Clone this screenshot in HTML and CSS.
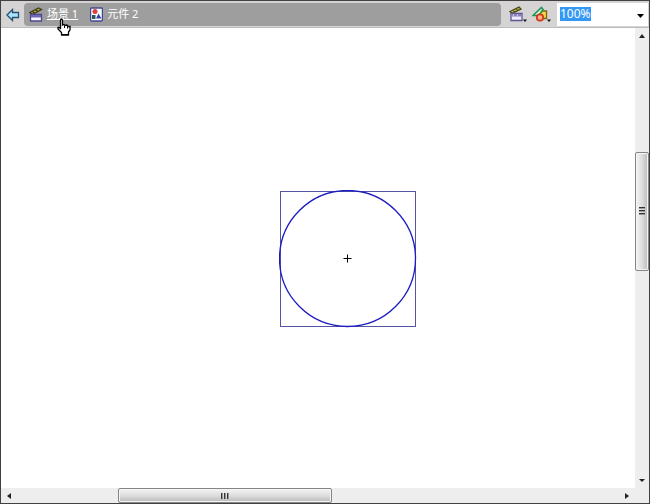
FILE: index.html
```html
<!DOCTYPE html>
<html lang="zh-CN">
<head>
<meta charset="utf-8">
<title>元件 2</title>
<link rel="stylesheet" href="styles.css">
</head>
<body>
<header class="toolbar">
  <button class="tool back" aria-label="返回">
    <svg width="14" height="14" viewBox="0 0 14 14"><path d="M1 7 6.500 1.500V4.500H12.500V9.500H6.500V12.500Z" fill="#a9e4fa" stroke="#235070" stroke-width="1.300"/></svg>
  </button>
  <nav class="crumbs">
    <a class="crumb scene" href="#">
      <svg width="14" height="15" viewBox="0 0 14 15"><path d="M.8 5.500 9.500 1 12.500 2.500 3.500 7.500Z" fill="#a8a43a" stroke="#3b3c16" stroke-width="1.300"/><path d="M3.500 4.500 5.500 6M6.500 2.800 8.800 4.500" stroke="#353613" stroke-width="1.300"/><path d="M1.500 7.500H12.500V14H1.500Z" fill="#f5f4ff" stroke="#4d4893" stroke-width="1.300"/><path d="M2 8H12V10.500H2Z" fill="#7168b5"/></svg>
      <span>场景 1</span>
    </a>
    <a class="crumb" href="#">
      <svg width="13" height="15" viewBox="0 0 13 15"><rect x=".6" y="1" width="11.800" height="13" rx="1" fill="#fff" stroke="#3f4a91" stroke-width="1.300"/><circle cx="5" cy="4.500" r="2.500" fill="#d9403b"/><path d="M2 8H5.500V12H2Z" fill="#275b57"/><path d="M8.500 6.500 11.500 11.500H6Z" fill="#353fae"/></svg>
      <span>元件 2</span>
    </a>
    <svg class="cursor" width="16" height="18" viewBox="0 0 16 18"><path d="M4.500 10V2Q5.500.5 6.500 2V7L8 6.500 9 7.500 11 7 12 8.500 14 8.500V12L12.500 14V17H5.500V14.500L2 11V9.500H3.500L5 11" fill="#fff" stroke="#000" stroke-width="1.300"/><path d="M8.500 8V10M11.500 8.500V10.500M6 16.500H12" stroke="#000"/></svg>
  </nav>
  <div class="tools">
    <button class="tool" aria-label="编辑场景">
      <svg width="19" height="17" viewBox="0 0 19 17"><path d="M1 5.500 10 1 12 3 3 7.500Z" fill="#b3ad3d" stroke="#4b4b1e" stroke-width="1.300"/><path d="M4 4.500 6 6M7 3 9 4.500" stroke="#4b4b1e"/><path d="M2 7.500H13V14.500H2Z" fill="#eeecff" stroke="#5e5791" stroke-width="1.300"/><path d="M2.500 8H12.500V10.500H2.500Z" fill="#857cb9"/><path d="M5 8 4 10M9 8 8 10" stroke="#d8d4ee"/><path d="M14 13.500H18L16 16Z" fill="#111"/></svg>
    </button>
    <button class="tool" aria-label="编辑元件">
      <svg width="20" height="17" viewBox="0 0 20 17"><path d="M7.500 5H14.500V12.500H7.500Z" fill="#f5d63e" stroke="#806514" stroke-width="1.300"/><path d="M1 9.500 9.500 1.500 11 3.500 7 9.500Z" fill="#d7f3dc" stroke="#229657" stroke-width="1.700"/><circle cx="8" cy="11.500" r="3.200" fill="#ffb184" stroke="#cf3c1e" stroke-width="1.800"/><path d="M15 13.500H19L17 16Z" fill="#111"/></svg>
    </button>
  </div>
  <div class="zoom">
    <input id="zoom" type="text" value="100%" aria-label="缩放比例" autofocus>
    <button class="tool drop" aria-label="选择缩放比例"><svg width="7" height="4" viewBox="0 0 7 4"><path d="M0 0H7L3.500 4Z" fill="#000"/></svg></button>
  </div>
</header>
<main class="stage">
  <svg class="symbol" width="138" height="138" viewBox="0 0 138 138" fill="none">
    <rect x="1.500" y="1.500" width="135" height="135" stroke="#5555a8"/>
    <circle cx="68.500" cy="68.500" r="68" stroke="#1b1bc0" stroke-width="1.300"/>
    <path d="M64.500 68.500H72.500M68.500 64.500V72.500" stroke="#000"/>
  </svg>
</main>
<div class="scroll vertical">
  <button class="arrow" aria-label="向上"><svg width="6" height="4" viewBox="0 0 6 4"><path d="M0 4 3 0 6 4Z"/></svg></button>
  <div class="before"></div>
  <div class="thumb"><i></i><i></i><i></i></div>
  <div class="after"></div>
  <button class="arrow" aria-label="向下"><svg width="6" height="3" viewBox="0 0 6 3"><path d="M0 0H6L3 3Z"/></svg></button>
</div>
<div class="scroll horizontal">
  <button class="arrow" aria-label="向左"><svg width="4" height="6" viewBox="0 0 4 6"><path d="M4 0V6L0 3Z"/></svg></button>
  <div class="before"></div>
  <div class="thumb"><i></i><i></i><i></i></div>
  <div class="after"></div>
  <button class="arrow" aria-label="向右"><svg width="4" height="6" viewBox="0 0 4 6"><path d="M0 0V6L4 3Z"/></svg></button>
</div>
<div class="corner"></div>
<script src="main.js"></script>
</body>
</html>
```
FILE: styles.css
```css
* { box-sizing: border-box; }
body {
  margin: 0;
  height: 100vh;
  display: grid;
  grid-template: 27px minmax(0, 1fr) 15px / minmax(0, 1fr) 14px;
  border: 1px solid #414141;
  background: #fff;
  font-family: "Noto Sans", "Noto Sans CJK SC", sans-serif;
  font-size: 11px;
  line-height: 14px;
  overflow: hidden;
}
button { border: 0; padding: 0; background: none; display: flex; align-items: center; justify-content: center; }
svg { display: block; flex: none; }
.toolbar {
  grid-column: 1 / -1;
  display: flex;
  align-items: stretch;
  background: #d5d3d3;
  border-bottom: 1px solid #bdbdbd;
  padding: 2px 1px 1px 4px;
}
.back { width: 16px; }
.crumbs {
  position: relative;
  flex: 1;
  display: flex;
  align-items: center;
  gap: 12px;
  margin-left: 3px;
  padding: 0 0 1px 5px;
  border-radius: 4px;
  background: #9e9e9e;
}
.crumb { display: flex; align-items: center; gap: 4px; color: #fff; text-decoration: none; white-space: nowrap; }
.scene { text-decoration: underline; }
.cursor { position: absolute; left: 32px; top: 15px; z-index: 1; }
.tools { display: flex; gap: 4px; padding: 0 5px 0 8px; }
.zoom { display: flex; width: 91px; background: #fff; }
.zoom input {
  flex: 1;
  min-width: 0;
  border: 0;
  outline: 0;
  padding: 0 0 2px 3px;
  background: none;
  color: #222;
  font: 12px/14px "Noto Sans", sans-serif;
}
.zoom input::selection { background: #3397f5; color: #fff; }
.drop { width: 16px; padding-top: 2px; }
.stage { position: relative; overflow: hidden; background: #fff; }
.symbol { position: absolute; left: calc(50% - 39px); top: calc(50% - 68px); }
.scroll { display: flex; background: #eee; }
.vertical { flex-direction: column; }
.arrow { flex: 0 0 16px; }
.arrow svg { fill: #222; }
.thumb { display: flex; align-items: center; justify-content: center; gap: 1px; border: 1px solid #858585; border-radius: 2px; box-shadow: inset 0 0 0 1px #f5f5f5; }
.vertical .thumb { flex: 118; flex-direction: column; background: linear-gradient(90deg, #f4f4f4, #dedede 50%, #bababa); }
.vertical .before { flex: 108; }
.vertical .after { flex: 202; }
.vertical i { width: 6px; height: 2px; border-top: 1px solid #333; border-bottom: 1px solid #999; }
.horizontal .thumb { flex: 213; background: linear-gradient(#f4f4f4, #dedede 50%, #bababa); }
.horizontal .before { flex: 101; }
.horizontal .after { flex: 288; }
.horizontal i { width: 2px; height: 6px; border-left: 1px solid #333; border-right: 1px solid #999; }
.corner { background: #eee; }
```
FILE: main.js
```js
const zoom = document.getElementById('zoom');
zoom.focus();
zoom.select();
```
